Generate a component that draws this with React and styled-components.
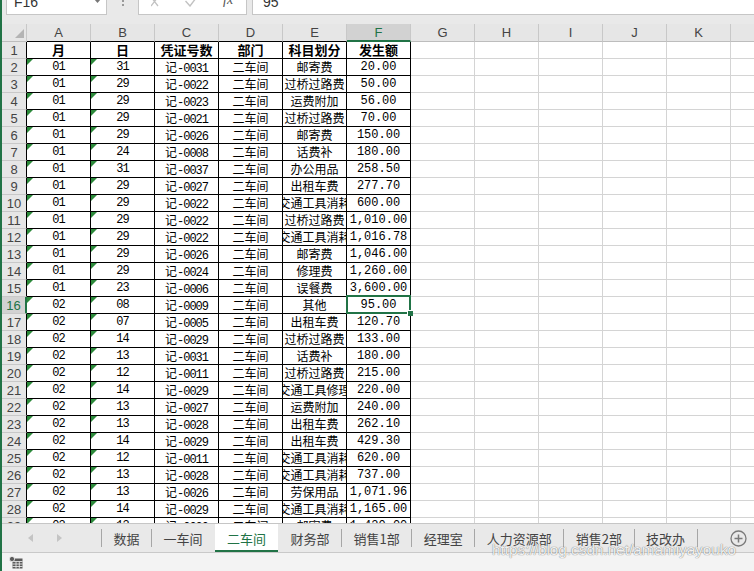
import React from "react";
import styled, { createGlobalStyle, css } from "styled-components";

const GREEN = "#217346";
const GRID = "#d4d4d4";
const HEAD_BG = "#e6e6e6";
const HEAD_SEL = "#d2d2d2";

const GlobalStyle = createGlobalStyle`
  html, body { margin: 0; padding: 0; background: #fff; }
  body { font-family: "Liberation Sans", "Noto Sans CJK SC", sans-serif; }
`;

const COLS = ["A", "B", "C", "D", "E", "F", "G", "H", "I", "J", "K", "L"];

// month, day, voucher, item, amount
const records = [
  ["01", "31", "0031", "邮寄费", "20.00"],
  ["01", "29", "0022", "过桥过路费", "50.00"],
  ["01", "29", "0023", "运费附加", "56.00"],
  ["01", "29", "0021", "过桥过路费", "70.00"],
  ["01", "29", "0026", "邮寄费", "150.00"],
  ["01", "24", "0008", "话费补", "180.00"],
  ["01", "31", "0037", "办公用品", "258.50"],
  ["01", "29", "0027", "出租车费", "277.70"],
  ["01", "29", "0022", "交通工具消耗", "600.00"],
  ["01", "29", "0022", "过桥过路费", "1,010.00"],
  ["01", "29", "0022", "交通工具消耗", "1,016.78"],
  ["01", "29", "0026", "邮寄费", "1,046.00"],
  ["01", "29", "0024", "修理费", "1,260.00"],
  ["01", "23", "0006", "误餐费", "3,600.00"],
  ["02", "08", "0009", "其他", "95.00"],
  ["02", "07", "0005", "出租车费", "120.70"],
  ["02", "14", "0029", "过桥过路费", "133.00"],
  ["02", "13", "0031", "话费补", "180.00"],
  ["02", "12", "0011", "过桥过路费", "215.00"],
  ["02", "14", "0029", "交通工具修理", "220.00"],
  ["02", "13", "0027", "运费附加", "240.00"],
  ["02", "13", "0028", "出租车费", "262.10"],
  ["02", "14", "0029", "出租车费", "429.30"],
  ["02", "12", "0011", "交通工具消耗", "620.00"],
  ["02", "13", "0028", "交通工具消耗", "737.00"],
  ["02", "13", "0026", "劳保用品", "1,071.96"],
  ["02", "14", "0029", "交通工具消耗", "1,165.00"],
  ["02", "13", "0030", "邮寄费", "1,420.00"],
];

const sheets = ["数据", "一车间", "二车间", "财务部", "销售1部", "经理室", "人力资源部", "销售2部", "技改办"];
const ACTIVE_SHEET = 2;

const Window = styled.div`
  position: relative;
  width: 754px;
  height: 571px;
  box-sizing: border-box;
  border-left: 2px solid ${GREEN};
  display: flex;
  flex-direction: column;
  overflow: hidden;
  background: #e9e9e9;
`;

const FormulaBar = styled.div`
  flex: none;
  height: 24px;
  display: flex;
  align-items: flex-start;
`;

const Field = styled.div`
  height: 15px;
  box-sizing: border-box;
  background: #fff;
  border: 1px solid #c6c6c6;
  border-top: none;
  display: flex;
  align-items: flex-start;
  overflow: hidden;
`;

const NameBox = styled(Field)`
  margin-left: 4px;
  width: 101px;
  padding: 0 5px 0 7px;
  justify-content: space-between;
`;

const FieldText = styled.span`
  font-size: 14px;
  line-height: 14px;
  margin-top: -5px;
  color: #333;
`;

const Grip = styled.div`
  width: 31px;
  display: flex;
  justify-content: center;
`;

const FxBox = styled(Field)`
  width: 109px;
  padding-left: 12px;
`;

const FxLabel = styled.span`
  margin-left: 25px;
  font: italic 14px "Liberation Serif", serif;
  line-height: 14px;
  margin-top: -7px;
  color: #555;
`;

const FormulaInput = styled(Field)`
  flex: 1;
  margin-left: 5px;
  border-right: none;
  padding-left: 10px;
`;

const Sheet = styled.div`
  flex: 1;
  min-height: 0;
  overflow: hidden;
  background: #fff;
`;

const Row = styled.div`
  display: flex;
  flex: none;
  height: ${(p) => p.$h}px;
`;

const Corner = styled.div`
  flex: none;
  width: 25px;
  box-sizing: border-box;
  border-right: 1px solid #c8c8c8;
  border-bottom: 1px solid #bdbdbd;
  background: ${HEAD_BG};
  display: flex;
  align-items: flex-end;
  justify-content: flex-end;
  padding: 0 2px 3px 0;
`;

const ColHead = styled.div`
  flex: none;
  width: 64px;
  box-sizing: border-box;
  border-right: 1px solid #c8c8c8;
  border-bottom: ${(p) => (p.$active ? `2px solid ${GREEN}` : `1px solid ${p.$under}`)};
  background: ${(p) => (p.$active ? HEAD_SEL : HEAD_BG)};
  color: ${(p) => (p.$active ? GREEN : "#444")};
  font: 13px "Liberation Sans", sans-serif;
  display: flex;
  align-items: center;
  justify-content: center;
`;

const RowHead = styled.div`
  flex: none;
  width: 25px;
  box-sizing: border-box;
  border-right: ${(p) => (p.$active ? `2px solid ${GREEN}` : `1px solid ${p.$edge}`)};
  border-bottom: 1px solid #c8c8c8;
  background: ${(p) => (p.$active ? HEAD_SEL : HEAD_BG)};
  color: ${(p) => (p.$active ? GREEN : "#444")};
  font: 13px "Liberation Sans", sans-serif;
  display: flex;
  align-items: center;
  justify-content: center;
`;

const kinds = {
  head: css`
    font: 700 13px "Noto Sans CJK SC", sans-serif;
  `,
  code: css`
    font: 12px "Liberation Mono", "Noto Sans CJK SC", monospace;
    letter-spacing: -1px;
  `,
  cjk: css`
    font: 12px "Noto Sans CJK SC", sans-serif;
  `,
  amount: css`
    font: 12px "Liberation Mono", monospace;
  `,
};

const Cell = styled.div`
  position: relative;
  flex: none;
  width: 64px;
  box-sizing: border-box;
  border-right: 1px solid ${(p) => (p.$boxed ? "#000" : GRID)};
  border-bottom: 1px solid ${(p) => (p.$boxed ? "#000" : GRID)};
  background: #fff;
  color: #000;
  display: flex;
  align-items: center;
  justify-content: center;
  white-space: nowrap;
  overflow: ${(p) => (p.$selected ? "visible" : "hidden")};
  ${(p) => kinds[p.$kind]}
  line-height: 16px;
`;

const Han = styled.span`
  font: 12px "Noto Sans CJK SC", sans-serif;
  letter-spacing: 0;
`;

const TextFlag = styled.span`
  position: absolute;
  top: 0;
  left: 0;
  width: 0;
  height: 0;
  border-top: 6px solid #2c8a3b;
  border-right: 6px solid transparent;
`;

const Selection = styled.span`
  position: absolute;
  z-index: 2;
  top: -2px;
  left: -1px;
  right: -1px;
  bottom: -1px;
  border: 2px solid ${GREEN};
  pointer-events: none;
`;

const Handle = styled.span`
  position: absolute;
  right: -4px;
  bottom: -4px;
  width: 5px;
  height: 5px;
  background: ${GREEN};
  border-left: 1px solid #fff;
  border-top: 1px solid #fff;
`;

const TabBar = styled.div`
  flex: none;
  height: 29px;
  box-sizing: border-box;
  border-top: 1px solid #c6c6c6;
  background: #e9e9e9;
  display: flex;
  align-items: stretch;
`;

const Nav = styled.div`
  flex: none;
  width: 99px;
  box-sizing: border-box;
  padding-left: 26px;
  display: flex;
  align-items: center;
  gap: 24px;
`;

const Sep = styled.span`
  flex: none;
  align-self: center;
  width: 1px;
  height: 18px;
  background: #a6a6a6;
  visibility: ${(p) => (p.$hidden ? "hidden" : "visible")};
`;

const Tab = styled.div`
  flex: none;
  display: flex;
  align-items: center;
  padding: 0 ${(p) => (p.$active ? 12 : 11.5)}px;
  box-sizing: border-box;
  font: 13px "Noto Sans CJK SC", sans-serif;
  color: ${(p) => (p.$active ? GREEN : "#444")};
  background: ${(p) => (p.$active ? "#fff" : "transparent")};
  border-bottom: 2px solid ${(p) => (p.$active ? GREEN : "transparent")};
  padding-top: 2px;
`;

const AddSheet = styled.div`
  margin-left: auto;
  margin-right: 7px;
  align-self: center;
  display: flex;
`;

const StatusBar = styled.div`
  flex: none;
  height: 19px;
  box-sizing: border-box;
  border-top: 1px solid #c9c9c9;
  background: #f3f3f3;
  display: flex;
  align-items: center;
  padding-left: 7px;
`;

const Watermark = styled.div`
  position: absolute;
  left: 490px;
  top: 541px;
  font: 15.3px "Liberation Sans", sans-serif;
  line-height: 18px;
  color: rgba(255, 255, 255, 0.92);
  text-shadow: 0 0 1px rgba(0, 0, 0, 0.45), 0 0 1px rgba(0, 0, 0, 0.3);
  white-space: nowrap;
  pointer-events: none;
`;

const Arrow = ({ dir }) => (
  <svg width="5" height="8" viewBox="0 0 5 8">
    <path d={dir === "left" ? "M5 0 L0 4 L5 8 Z" : "M0 0 L5 4 L0 8 Z"} fill="#c4c4c4" />
  </svg>
);

const SelectedRow = 16;
const SelectedCol = "F";

function DataRow({ n, cells }) {
  const active = n === SelectedRow;
  return (
    <Row $h={17}>
      <RowHead $active={active} $edge="#000">
        {n}
      </RowHead>
      {cells.map((c, i) => {
        const col = COLS[i];
        const sel = active && col === SelectedCol;
        return (
          <Cell key={col} $boxed={i < 6} $kind={c.kind} $selected={sel}>
            {c.flag && <TextFlag />}
            {c.content}
            {sel && (
              <Selection>
                <Handle />
              </Selection>
            )}
          </Cell>
        );
      })}
    </Row>
  );
}

const emptyCells = Array.from({ length: 6 }, () => ({ kind: "cjk", content: "" }));

export default function App() {
  const headerCells = ["月", "日", "凭证号数", "部门", "科目划分", "发生额"].map((t) => ({
    kind: "head",
    content: t,
  }));

  const dataRows = records.map(([m, d, v, item, amt]) => [
    { kind: "code", content: m, flag: true },
    { kind: "code", content: d, flag: true },
    {
      kind: "code",
      content: (
        <span>
          <Han>记</Han>-{v}
        </span>
      ),
    },
    { kind: "cjk", content: "二车间" },
    { kind: "cjk", content: item },
    { kind: "amount", content: amt },
    ...emptyCells,
  ]);

  return (
    <>
      <GlobalStyle />
      <Window>
        <FormulaBar>
          <NameBox>
            <FieldText>F16</FieldText>
            <svg width="7" height="4" viewBox="0 0 7 4" style={{ marginTop: -1 }}>
              <path d="M0 0 L7 0 L3.5 4 Z" fill="#777" />
            </svg>
          </NameBox>
          <Grip>
            <svg width="2" height="8" viewBox="0 0 2 8">
              <rect x="0" y="0" width="2" height="2" fill="#9a9a9a" />
              <rect x="0" y="4" width="2" height="2" fill="#9a9a9a" />
            </svg>
          </Grip>
          <FxBox>
            <svg width="8" height="7" viewBox="0 0 8 7">
              <path d="M0 -3 L7 6 M7 -3 L0 6" stroke="#c2c2c2" strokeWidth="1.3" fill="none" />
            </svg>
            <svg width="13" height="7" viewBox="0 0 13 7" style={{ marginLeft: 26 }}>
              <path d="M0.5 1 L5 6 L12.5 -4" stroke="#c2c2c2" strokeWidth="1.4" fill="none" />
            </svg>
            <FxLabel>fx</FxLabel>
          </FxBox>
          <FormulaInput>
            <FieldText>95</FieldText>
          </FormulaInput>
        </FormulaBar>

        <Sheet>
          <Row $h={18}>
            <Corner>
              <svg width="9" height="9" viewBox="0 0 9 9">
                <path d="M9 0 L9 9 L0 9 Z" fill="#b4b4b4" />
              </svg>
            </Corner>
            {COLS.map((c, i) => (
              <ColHead key={c} $active={c === SelectedCol} $under={i < 6 ? "#000" : "#bdbdbd"}>
                {c}
              </ColHead>
            ))}
          </Row>
          <DataRow n={1} cells={[...headerCells, ...emptyCells]} />
          {dataRows.map((cells, i) => (
            <DataRow key={i} n={i + 2} cells={cells} />
          ))}
        </Sheet>

        <TabBar>
          <Nav>
            <Arrow dir="left" />
            <Arrow dir="right" />
          </Nav>
          <Sep />
          {sheets.map((s, i) => (
            <React.Fragment key={s}>
              <Tab $active={i === ACTIVE_SHEET}>{s}</Tab>
              {i < sheets.length - 1 ? (
                <Sep $hidden={i === ACTIVE_SHEET || i + 1 === ACTIVE_SHEET} />
              ) : (
                <Sep />
              )}
            </React.Fragment>
          ))}
          <AddSheet>
            <svg width="17" height="17" viewBox="0 0 17 17">
              <circle cx="8.5" cy="8.5" r="7.5" fill="none" stroke="#7a7a7a" strokeWidth="1.3" />
              <path d="M8.5 4.5 V12.5 M4.5 8.5 H12.5" stroke="#7a7a7a" strokeWidth="1.5" />
            </svg>
          </AddSheet>
        </TabBar>

        <StatusBar>
          <svg width="14" height="13" viewBox="0 0 14 13">
            <rect x="3.5" y="2.5" width="10" height="10" fill="#5a5a5a" />
            <path d="M3.5 5.5 H13.5 M3.5 8 H13.5 M3.5 10.5 H13.5 M7 5.5 V12.5 M10.3 5.5 V12.5" stroke="#f3f3f3" strokeWidth="0.8" />
            <circle cx="3" cy="3" r="2.6" fill="#5a5a5a" stroke="#f3f3f3" strokeWidth="0.8" />
          </svg>
        </StatusBar>

        <Watermark>https://blog.csdn.net/amamiyayouko</Watermark>
      </Window>
    </>
  );
}
